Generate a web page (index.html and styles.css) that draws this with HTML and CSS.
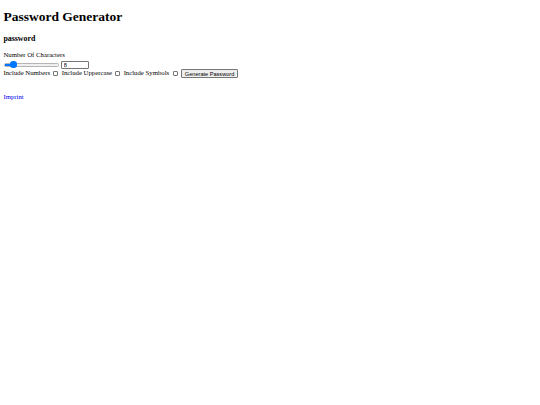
FILE: index.html
```html
<!DOCTYPE html>
<html lang="en">
<head>
<meta charset="utf-8">
<title>Password Generator</title>
<link rel="stylesheet" href="styles.css">
</head>
<body>
<h1 class="title">Password Generator</h1>
<h3 class="output">password</h3>
<form class="generator">
  <label class="field-label" for="length">Number Of Characters</label><br>
  <input class="length-range" type="range" id="length" min="4" max="40" value="8">
  <input class="length-number" type="number" min="4" max="40" value="8"><br>
  <label for="numbers">Include Numbers</label>
  <input class="check" type="checkbox" id="numbers">
  <label for="upper">Include Uppercase</label>
  <input class="check" type="checkbox" id="upper">
  <label for="symbols">Include Symbols</label>
  <input class="check" type="checkbox" id="symbols">
  <button type="button" class="generate">Generate Password</button>
</form>
<footer class="footer">
  <a class="imprint" href="#">Imprint</a>
</footer>
</body>
</html>
```
FILE: styles.css
```css
html {
  background: #ffffff;
}
body {
  margin: 3.4px;
  font-family: "Liberation Serif", "Times New Roman", serif;
  font-size: 6.75px;
  color: #000000;
}
.title {
  font-size: 13.5px;
  margin: 6px 0 9px;
}
.output {
  font-size: 7.9px;
  margin: 7.9px 0;
}
.field-label {
  line-height: 8px;
}
.length-range {
  -webkit-appearance: none;
  appearance: none;
  width: 53px;
  height: 2.2px;
  margin: 1.5px 0.4px 0.8px 0.6px;
  border-radius: 1.5px;
  border: 0.4px solid #b5b5b5;
  background: linear-gradient(to right, #0075ff 0, #0075ff 14%, #efefef 14%, #efefef 100%);
  vertical-align: middle;
}
.length-range::-webkit-slider-thumb {
  -webkit-appearance: none;
  appearance: none;
  width: 6.4px;
  height: 6.4px;
  border-radius: 50%;
  background: #0075ff;
  border: none;
}
.length-number {
  width: 28px;
  height: 8.6px;
  box-sizing: border-box;
  font-family: "Liberation Sans", Arial, sans-serif;
  font-size: 5.6px;
  padding: 0 1.6px;
  margin: 1.4px 0 0 0;
  border: 0.8px solid #767676;
  border-radius: 1px;
  vertical-align: middle;
}
.length-number::-webkit-inner-spin-button {
  display: none;
}
.check {
  -webkit-appearance: none;
  appearance: none;
  box-sizing: border-box;
  width: 5px;
  height: 5px;
  margin: 1.2px 1.5px 1.2px 1.7px;
  border: 0.6px solid #767676;
  border-radius: 1px;
  background: #ffffff;
  vertical-align: -1.2px;
}
.generate {
  font-family: "Liberation Sans", Arial, sans-serif;
  font-size: 5.6px;
  padding: 0.4px 2.5px;
  margin: 0 0 0 0.6px;
  border: 0.8px solid #767676;
  border-radius: 1px;
  background: #efefef;
  color: #000000;
}
.footer {
  margin-top: 15px;
}
.imprint {
  color: #0000ee;
  text-decoration: underline;
}
```
